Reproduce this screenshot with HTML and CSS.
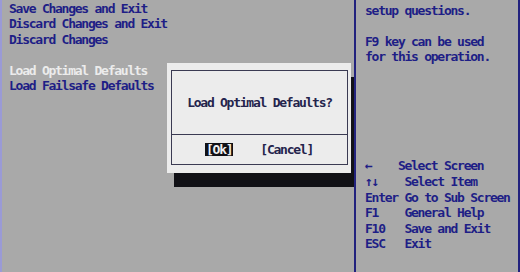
FILE: index.html
```html
<!DOCTYPE html>
<html lang="en">
<head>
    <meta charset="UTF-8">
    <meta name="viewport" content="width=device-width, initial-scale=1.0">
    <title>BIOS Setup - Exit</title>
    <link rel="stylesheet" href="styles.css">
</head>
<body>
    <div class="screen">
        <div class="main">
            <ul class="menu">
                <li>Save Changes and Exit</li>
                <li>Discard Changes and Exit</li>
                <li>Discard Changes</li>
                <li class="gap">&nbsp;</li>
                <li class="active">Load Optimal Defaults</li>
                <li>Load Failsafe Defaults</li>
            </ul>

            <div class="dialog">
                <div class="dialog-box">
                    <div class="dialog-title">Load Optimal Defaults?</div>
                    <div class="dialog-buttons">
                        <span class="btn selected">[Ok]</span>
                        <span class="btn">[Cancel]</span>
                    </div>
                </div>
            </div>
        </div>

        <div class="side">
            <div class="help">setup questions.

F9 key can be used
for this operation.</div>
            <div class="keys">←    Select Screen
↑↓    Select Item
Enter Go to Sub Screen
F1    General Help
F10   Save and Exit
ESC   Exit</div>
        </div>
    </div>
</body>
</html>
```

FILE: styles.css
```css
body {
    margin: 0;
    background: #a9a9a9;
    font-family: "DejaVu Sans Mono", "Liberation Mono", monospace;
    font-size: 13px;
    font-weight: bold;
    letter-spacing: -1.25px;
    color: #1e1e86;
}

.screen {
    display: flex;
    width: 518px;
    height: 272px;
    border-left: 2px solid #9a9ad6;
    background: #a9a9a9;
}

.main {
    position: relative;
    width: 352px;
    border-right: 2px solid #22227e;
    overflow: hidden;
}

.menu {
    list-style: none;
    margin: 0;
    padding: 0.5px 0 0 7px;
    line-height: 15.6px;
}

.menu li {
    white-space: pre;
}

.menu .active {
    color: #ececec;
}

.dialog {
    position: absolute;
    left: 165px;
    top: 63px;
    width: 177px;
    height: 95px;
    padding: 7px 3px 8px 4px;
    background: #ececec;
    box-shadow: 7px 14px 0 #111116;
}

.dialog-box {
    display: flex;
    flex-direction: column;
    height: 93px;
    border: 1px solid #3a3a52;
    color: #24244c;
}

.dialog-title {
    display: flex;
    align-items: center;
    justify-content: center;
    height: 63px;
    border-bottom: 1px solid #3a3a52;
}

.dialog-buttons {
    display: flex;
    flex: 1;
    align-items: center;
    justify-content: center;
    gap: 26px;
}

.btn {
    line-height: 13px;
    padding: 0 1px;
}

.btn.selected {
    background: #111116;
    color: #f0f0f0;
}

.side {
    width: 153px;
    padding: 2.5px 0 0 9px;
    border-right: 2px solid #22227e;
    line-height: 15.6px;
}

.help,
.keys {
    white-space: pre;
}

.keys {
    margin-top: 93.6px;
}
```
